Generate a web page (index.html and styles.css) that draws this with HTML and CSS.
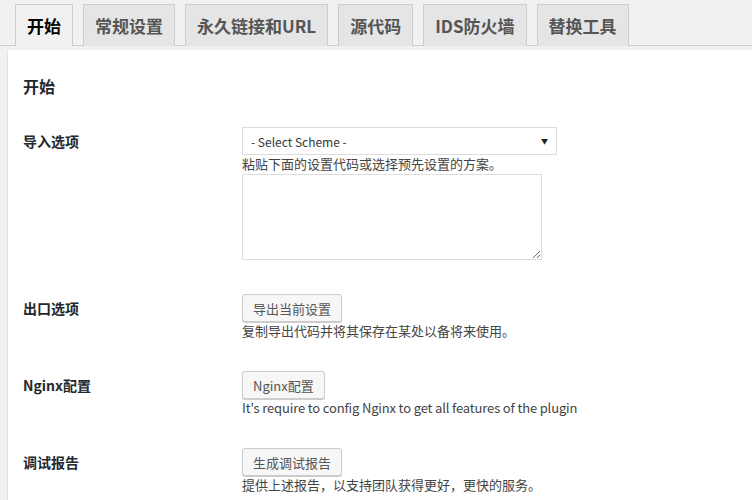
FILE: index.html
```html
<!DOCTYPE html>
<html>
<head>
  <meta charset="utf-8">
  <title>开始</title>
  <link rel="stylesheet" href="styles.css">
</head>
<body>
  <nav class="tabs">
    <a class="tab active">开始</a>
    <a class="tab">常规设置</a>
    <a class="tab">永久链接和URL</a>
    <a class="tab">源代码</a>
    <a class="tab">IDS防火墙</a>
    <a class="tab">替换工具</a>
  </nav>

  <section class="panel">
    <h2>开始</h2>

    <div class="row">
      <div class="label">导入选项</div>
      <div class="field">
        <div class="select">
          <span>- Select Scheme -</span>
          <span class="arrow">&#9660;</span>
        </div>
        <p class="help">粘贴下面的设置代码或选择预先设置的方案。</p>
        <textarea class="code"></textarea>
      </div>
    </div>

    <div class="row">
      <div class="label">出口选项</div>
      <div class="field">
        <button class="btn">导出当前设置</button>
        <p class="help">复制导出代码并将其保存在某处以备将来使用。</p>
      </div>
    </div>

    <div class="row">
      <div class="label">Nginx配置</div>
      <div class="field">
        <button class="btn">Nginx配置</button>
        <p class="help latin">It's require to config Nginx to get all features of the plugin</p>
      </div>
    </div>

    <div class="row">
      <div class="label">调试报告</div>
      <div class="field">
        <button class="btn">生成调试报告</button>
        <p class="help">提供上述报告，以支持团队获得更好，更快的服务。</p>
      </div>
    </div>
  </section>
</body>
</html>
```

FILE: styles.css
```css
* {
  box-sizing: border-box;
}

body {
  margin: 0;
  background: #f1f1f1;
  font-family: "Noto Sans CJK SC", "Noto Sans", sans-serif;
  color: #23282d;
  overflow: hidden;
}

.tabs {
  display: flex;
  gap: 10px;
  padding: 4px 0 0 15px;
  border-bottom: 1px solid #ccc;
  height: 46px;
}

.tab {
  display: flex;
  align-items: center;
  height: 42px;
  padding: 0 11px;
  border: 1px solid #ccc;
  border-bottom: none;
  background: #e5e5e5;
  color: #555;
  font-size: 17px;
  font-weight: bold;
}

.tab.active {
  background: #f1f1f1;
  color: #000;
}

.panel {
  margin: 4px 0 0 7px;
  background: #fff;
  border-left: 1px solid #e2e2e2;
  padding: 22px 0 20px 15px;
  height: 460px;
}

h2 {
  margin: 0 0 27px;
  font-size: 16px;
  line-height: 28px;
  font-weight: bold;
}

.row {
  display: flex;
  margin-bottom: 31px;
}

.row:first-of-type {
  margin-bottom: 34px;
}

.label {
  width: 219px;
  font-size: 14px;
  font-weight: bold;
  line-height: 28px;
}

.field {
  display: flex;
  flex-direction: column;
  align-items: flex-start;
}

.select {
  display: flex;
  justify-content: space-between;
  align-items: center;
  width: 315px;
  height: 28px;
  padding: 0 8px;
  border: 1px solid #ddd;
  font-size: 12px;
  color: #32373c;
}

.arrow {
  font-size: 7px;
  color: #222;
}

.help {
  margin: 0;
  font-size: 13px;
  line-height: 18px;
  color: #444;
}

.help.latin {
  letter-spacing: -0.15px;
}

.code {
  width: 300px;
  height: 86px;
  margin-top: 1px;
  border: 1px solid #ddd;
  resize: vertical;
}

.btn {
  height: 28px;
  padding: 0 10px;
  border: 1px solid #ccc;
  border-radius: 3px;
  background: #f7f7f7;
  box-shadow: 0 1px 0 #ccc;
  color: #555;
  font-family: inherit;
  font-size: 13px;
}
```
